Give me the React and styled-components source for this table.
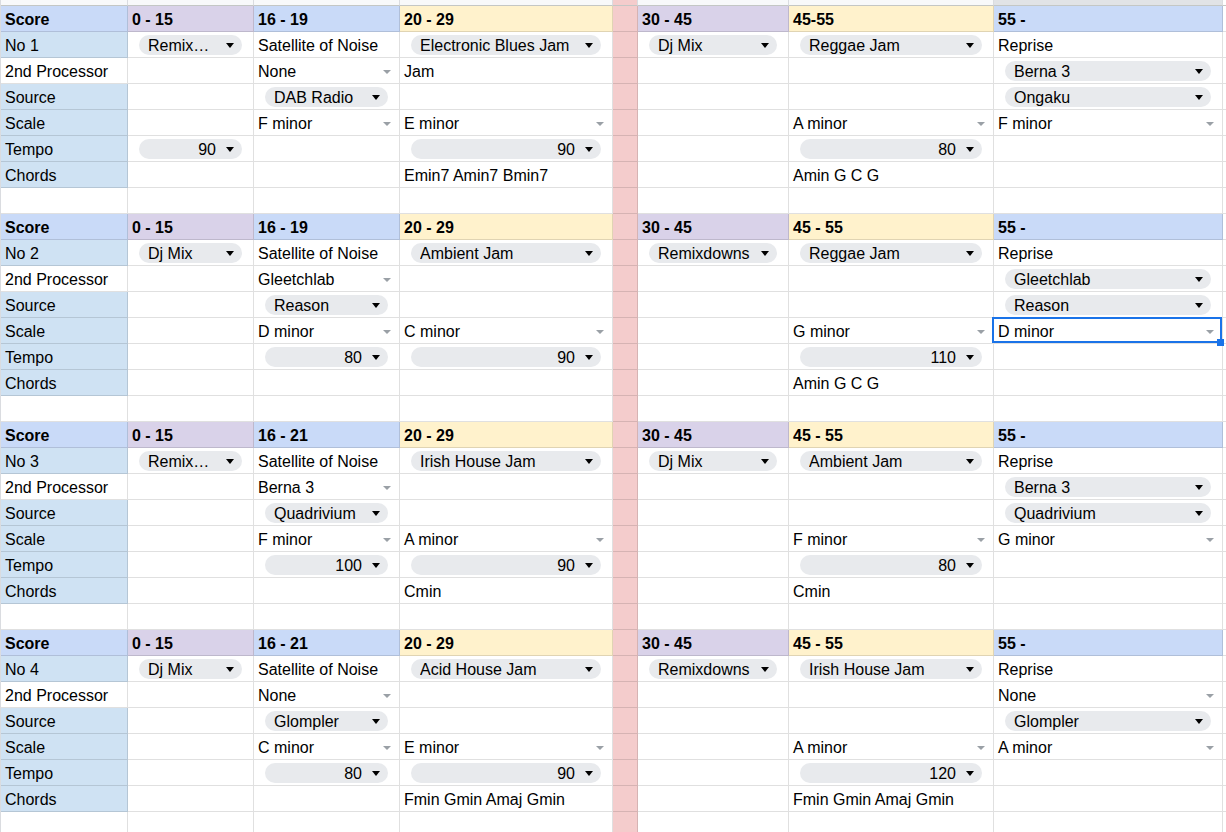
import React from "react";
import styled, { createGlobalStyle } from "styled-components";

const GlobalStyle = createGlobalStyle`
  html, body {
    margin: 0;
    padding: 0;
    background: #fff;
    overflow: hidden;
  }
  body {
    font-family: Arial, "Liberation Sans", sans-serif;
    font-size: 16px;
    color: #000;
  }
`;

const Sheet = styled.div`
  display: grid;
  grid-template-columns: 127px 126px 146px 213px 25px 151px 205px 229px 1fr;
  grid-template-rows: 6px;
  grid-auto-rows: 26px;
  width: 1226px;
  box-sizing: border-box;
  border-left: 1px solid #dadce0;
`;

const StripCell = styled.div`
  box-sizing: border-box;
  background: ${(p) => p.$bg};
  border-right: 1px solid #dadce0;
  border-bottom: 1px solid #c4c7c5;
`;

const Cell = styled.div`
  position: relative;
  box-sizing: border-box;
  min-width: 0;
  display: flex;
  align-items: center;
  justify-content: space-between;
  padding: ${(p) => (p.$chip ? "1px 11px 0" : "2px 8px 0 4px")};
  background: ${(p) => p.$bg || "#fff"};
  border-right: 1px solid rgba(0, 0, 0, 0.12);
  border-bottom: 1px solid rgba(0, 0, 0, 0.12);
  font-weight: ${(p) => (p.$bold ? 700 : 400)};
  white-space: nowrap;
`;

const Chip = styled.div`
  flex: 1;
  min-width: 0;
  height: 20px;
  box-sizing: border-box;
  display: flex;
  align-items: center;
  justify-content: ${(p) => (p.$num ? "flex-end" : "flex-start")};
  gap: 10px;
  padding: 1px 8px 0 9px;
  border-radius: 10px;
  background: #e8eaed;
`;

const ChipText = styled.span`
  flex: ${(p) => (p.$num ? "0 1 auto" : 1)};
  min-width: 0;
  overflow: hidden;
  text-overflow: ellipsis;
`;

const Arrow = styled.span`
  flex-shrink: 0;
  width: 0;
  height: 0;
  border-left: ${(p) => (p.$muted ? 4 : 4.5)}px solid transparent;
  border-right: ${(p) => (p.$muted ? 4 : 4.5)}px solid transparent;
  border-top: ${(p) => (p.$muted ? 4 : 5)}px solid
    ${(p) => (p.$muted ? "#9aa0a6" : "#000")};
`;

const Selection = styled.div`
  position: absolute;
  left: -2px;
  top: -1px;
  right: 0;
  bottom: 0;
  border: 2px solid #1a73e8;
  pointer-events: none;
  z-index: 2;
`;

const Handle = styled.div`
  position: absolute;
  right: -2px;
  bottom: -3px;
  width: 7px;
  height: 7px;
  background: #1a73e8;
  z-index: 3;
`;

const chip = (v) => ({ k: "chip", v });
const num = (v) => ({ k: "num", v });
const drop = (v) => ({ k: "drop", v });
const sel = (v) => ({ k: "drop", v, selected: true });

const headBg = ["#c9daf8", "#d9d2e9", "#c9daf8", "#fff2cc", "#f4cccc", "#d9d2e9", "#fff2cc", "#c9daf8", "#fff"];
const stripBg = ["#f8f9fa", "#f8f9fa", "#f8f9fa", "#f8f9fa", "#f4cccc", "#f8f9fa", "#f8f9fa", "#e1e3e6", "#fff"];

const labels = ["", "2nd Processor", "Source", "Scale", "Tempo", "Chords"];

const blocks = [
  {
    head: ["0 - 15", "16 - 19", "20 - 29", "30 - 45", "45-55", "55 -"],
    no: "No 1",
    rows: [
      [chip("Remixdowns"), "Satellite of Noise", chip("Electronic Blues Jam"), chip("Dj Mix"), chip("Reggae Jam"), "Reprise"],
      [null, drop("None"), "Jam", null, null, chip("Berna 3")],
      [null, chip("DAB Radio"), null, null, null, chip("Ongaku")],
      [null, drop("F minor"), drop("E minor"), null, drop("A minor"), drop("F minor")],
      [num("90"), null, num("90"), null, num("80"), null],
      [null, null, "Emin7 Amin7 Bmin7", null, "Amin G C G", null],
    ],
  },
  {
    head: ["0 - 15", "16 - 19", "20 - 29", "30 - 45", "45 - 55", "55 -"],
    no: "No 2",
    rows: [
      [chip("Dj Mix"), "Satellite of Noise", chip("Ambient Jam"), chip("Remixdowns"), chip("Reggae Jam"), "Reprise"],
      [null, drop("Gleetchlab"), null, null, null, chip("Gleetchlab")],
      [null, chip("Reason"), null, null, null, chip("Reason")],
      [null, drop("D minor"), drop("C minor"), null, drop("G minor"), sel("D minor")],
      [null, num("80"), num("90"), null, num("110"), null],
      [null, null, null, null, "Amin G C G", null],
    ],
  },
  {
    head: ["0 - 15", "16 - 21", "20 - 29", "30 - 45", "45 - 55", "55 -"],
    no: "No 3",
    rows: [
      [chip("Remixdowns"), "Satellite of Noise", chip("Irish House Jam"), chip("Dj Mix"), chip("Ambient Jam"), "Reprise"],
      [null, drop("Berna 3"), null, null, null, chip("Berna 3")],
      [null, chip("Quadrivium"), null, null, null, chip("Quadrivium")],
      [null, drop("F minor"), drop("A minor"), null, drop("F minor"), drop("G minor")],
      [null, num("100"), num("90"), null, num("80"), null],
      [null, null, "Cmin", null, "Cmin", null],
    ],
  },
  {
    head: ["0 - 15", "16 - 21", "20 - 29", "30 - 45", "45 - 55", "55 -"],
    no: "No 4",
    rows: [
      [chip("Dj Mix"), "Satellite of Noise", chip("Acid House Jam"), chip("Remixdowns"), chip("Irish House Jam"), "Reprise"],
      [null, drop("None"), null, null, null, drop("None")],
      [null, chip("Glompler"), null, null, null, chip("Glompler")],
      [null, drop("C minor"), drop("E minor"), null, drop("A minor"), drop("A minor")],
      [null, num("80"), num("90"), null, num("120"), null],
      [null, null, "Fmin Gmin Amaj Gmin", null, "Fmin Gmin Amaj Gmin", null],
    ],
  },
];

// spreads the 6 data columns around the pink spacer column
const withSpacer = (vals) => [vals[0], vals[1], vals[2], "__spacer", vals[3], vals[4], vals[5]];

function DataCell({ value, bg }) {
  if (value === "__spacer") return <Cell $bg="#f4cccc" />;
  if (!value) return <Cell $bg={bg} />;
  if (typeof value === "string") return <Cell $bg={bg}>{value}</Cell>;
  if (value.k === "chip" || value.k === "num") {
    const isNum = value.k === "num";
    return (
      <Cell $chip>
        <Chip $num={isNum}>
          <ChipText $num={isNum}>{value.v}</ChipText>
          <Arrow />
        </Chip>
      </Cell>
    );
  }
  return (
    <Cell>
      {value.v}
      <Arrow $muted />
      {value.selected && (
        <>
          <Selection />
          <Handle />
        </>
      )}
    </Cell>
  );
}

function Block({ data }) {
  return (
    <>
      <Cell $bg={headBg[0]} $bold>Score</Cell>
      {withSpacer(data.head).map((h, i) =>
        h === "__spacer" ? (
          <Cell key={i} $bg="#f4cccc" />
        ) : (
          <Cell key={i} $bg={headBg[i + 1]} $bold>{h}</Cell>
        )
      )}
      <Cell />

      {data.rows.map((row, r) => (
        <React.Fragment key={r}>
          <Cell $bg={r === 1 ? "#fff" : "#cfe2f3"}>{r === 0 ? data.no : labels[r]}</Cell>
          {withSpacer(row).map((v, i) => (
            <DataCell key={i} value={v} />
          ))}
          <Cell />
        </React.Fragment>
      ))}

      {headBg.map((_, i) => (
        <Cell key={i} $bg={i === 4 ? "#f4cccc" : "#fff"} />
      ))}
    </>
  );
}

export default function App() {
  return (
    <>
      <GlobalStyle />
      <Sheet>
        {stripBg.map((bg, i) => (
          <StripCell key={i} $bg={bg} />
        ))}
        {blocks.map((b, i) => (
          <Block key={i} data={b} />
        ))}
      </Sheet>
    </>
  );
}
